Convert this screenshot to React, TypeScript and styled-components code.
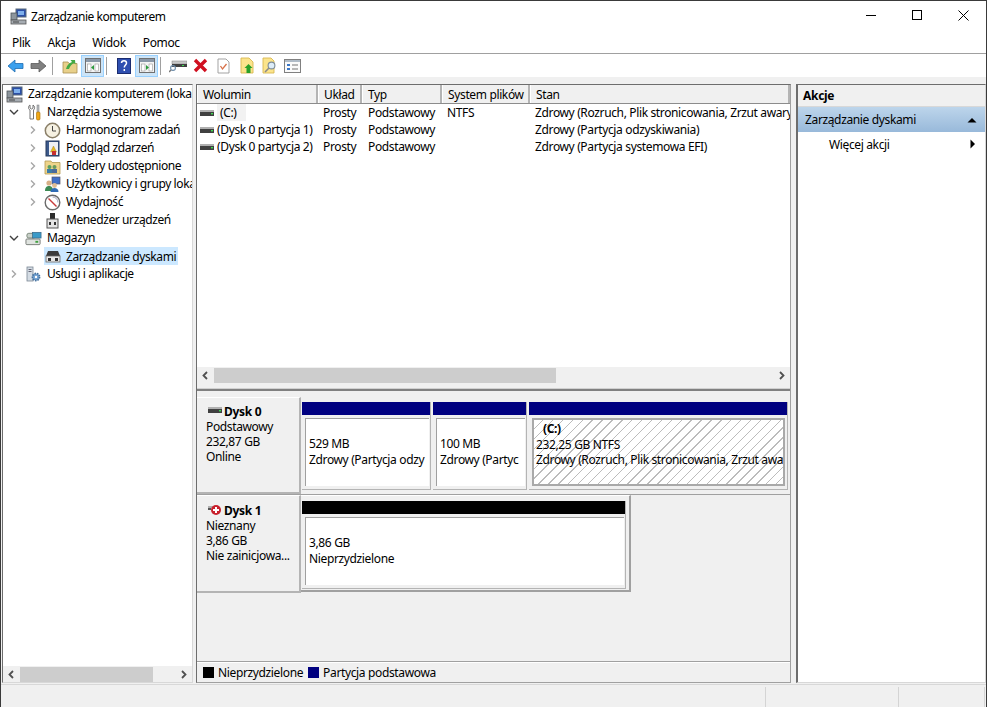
import React from 'react';
import styled, { createGlobalStyle } from 'styled-components';

const GlobalStyle = createGlobalStyle`
    html, body { margin: 0; padding: 0; background: #fff; }
    * { box-sizing: border-box; }
    body {
        font-family: "Noto Sans", "Open Sans", sans-serif;
        font-size: 12px;
        color: #000;
    }
`;

const Window = styled.div`
    width: 987px;
    height: 707px;
    display: flex;
    flex-direction: column;
    background: #f0f0f0;
    border-top: 1px solid #3a3a3a;
    border-left: 1px solid #3a3a3a;
    border-right: 1px solid #3a3a3a;
    overflow: hidden;
    letter-spacing: -0.36px;
`;

const TitleBar = styled.div`
    height: 31px;
    flex: none;
    background: #fff;
    display: flex;
    align-items: center;
    padding-left: 9px;
`;

const TitleText = styled.span`
    flex: 1;
    padding: 0 0 1px 4px;
    letter-spacing: -0.46px;
`;

const WinButton = styled.div`
    width: 46px;
    height: 31px;
    display: flex;
    align-items: center;
    justify-content: center;
    padding-bottom: 2px;
`;

const MenuBar = styled.div`
    height: 22px;
    flex: none;
    background: #fff;
    border-bottom: 1px solid #a0a0a0;
    display: flex;
    align-items: center;
    padding-left: 11px;
    gap: 17px;
`;

const ToolBar = styled.div`
    height: 23px;
    flex: none;
    background: #fff;
    display: flex;
    align-items: center;
    padding-left: 3px;
`;

const ToolButton = styled.div<{ $active?: boolean }>`
    width: 23px;
    height: 22px;
    display: flex;
    align-items: center;
    justify-content: center;
    background: ${p => (p.$active ? '#cce4f7' : 'transparent')};
    border: 1px solid ${p => (p.$active ? '#99d1ff' : 'transparent')};
`;

const ToolSep = styled.div`
    width: 1px;
    height: 18px;
    background: #a0a0a0;
    margin: 0 5px 0 2px;
`;

const Main = styled.div`
    flex: 1;
    min-height: 0;
    display: flex;
    padding: 7px 0 1px 1px;
    border-bottom: 1px solid #d8d8d8;
`;

const TreePane = styled.div`
    width: 191px;
    flex: none;
    display: flex;
    flex-direction: column;
    background: #fff;
    border: 1px solid #6d6d6d;
    border-right-color: #d8d8d8;
    border-bottom-color: #d8d8d8;
`;

const Tree = styled.div`
    flex: 1;
    overflow: hidden;
    letter-spacing: -0.4px;
`;

const TreeRow = styled.div<{ $level: number }>`
    height: 18px;
    display: flex;
    align-items: center;
    white-space: nowrap;
    padding-left: ${p => [3, 5, 24][p.$level]}px;
`;

const Chevron = styled.div`
    width: 12px;
    flex: none;
    display: flex;
    justify-content: center;
    margin-right: 5px;
`;

const TreeIcon = styled.div`
    width: 17px;
    height: 17px;
    flex: none;
    display: flex;
    align-items: center;
    justify-content: center;
    margin-right: 5px;
`;

const TreeLabel = styled.span`
    line-height: 18px;
`;

const SelectedRow = styled.div`
    display: flex;
    align-items: center;
    background: #cce8ff;
    width: 134px;
    height: 18px;
    margin-left: 17px;
`;

const ScrollBar = styled.div`
    height: 16px;
    flex: none;
    display: flex;
    align-items: center;
    background: #f0f0f0;
`;

const ScrollArrow = styled.div`
    width: 17px;
    flex: none;
    display: flex;
    justify-content: center;
`;

const ScrollTrack = styled.div`
    flex: 1;
    height: 15px;
`;

const ScrollThumb = styled.div<{ $w: number }>`
    width: ${p => p.$w}px;
    height: 15px;
    background: #cdcdcd;
`;

const Center = styled.div`
    width: 595px;
    flex: none;
    margin-left: 3px;
    display: flex;
    flex-direction: column;
    border: 1px solid #6d6d6d;
    border-right-color: #a0a0a0;
    border-bottom-color: #a0a0a0;
    min-height: 0;
`;

const ListPane = styled.div`
    height: 306px;
    flex: none;
    display: flex;
    flex-direction: column;
    background: #fff;
    border-bottom: 2px solid #808080;
`;

const ListHeader = styled.div`
    height: 19px;
    flex: none;
    display: flex;
    background: #f0f0f0;
    border-bottom: 1px solid #8c8c8c;
`;

const HeaderCell = styled.div<{ $w: number; $grow?: boolean }>`
    width: ${p => p.$w}px;
    flex: ${p => (p.$grow ? 1 : 'none')};
    padding-left: 5px;
    line-height: 19px;
    white-space: nowrap;
    overflow: hidden;
    border-right: 2px solid #b4b4b4;
    border-left: 1px solid #fff;
`;

const ListBody = styled.div`
    flex: 1;
    min-height: 0;
`;

const ListRow = styled.div`
    height: 17px;
    display: flex;
    align-items: center;
    white-space: nowrap;
`;

const Cell = styled.div<{ $w: number; $grow?: boolean }>`
    width: ${p => p.$w}px;
    flex: ${p => (p.$grow ? 1 : 'none')};
    padding-left: 6px;
    overflow: hidden;
    white-space: nowrap;
`;

const NameCell = styled.div`
    width: 120px;
    flex: none;
    display: flex;
    align-items: center;
    padding-left: 3px;
    gap: 3px;
    overflow: hidden;
`;

const FocusedName = styled.span`
    background: #f2f2f2;
    padding: 0 9px 0 3px;
    line-height: 17px;
`;

const ListFooter = styled.div`
    height: 6px;
    flex: none;
    background: #f0f0f0;
    border-bottom: 1px solid #d0d0d0;
`;

const GraphPane = styled.div`
    flex: 1;
    min-height: 0;
    display: flex;
    flex-direction: column;
    padding-top: 6px;
`;

const DiskList = styled.div`
    flex: 1;
    min-height: 0;
`;

const DiskRow = styled.div<{ $h: number }>`
    height: ${p => p.$h}px;
    display: flex;
    border-bottom: 1px solid #a0a0a0;
`;

const LastDiskRow = styled(DiskRow)`
    border-bottom: none;
`;

const DiskInfo = styled.div<{ $top: number }>`
    width: 104px;
    flex: none;
    padding: ${p => p.$top}px 0 0 9px;
    line-height: 15px;
    border-right: 2px solid #b4b4b4;
    border-bottom: 2px solid #b4b4b4;
    border-top: 1px solid #fff;
    white-space: nowrap;
`;

const DiskName = styled.div`
    display: flex;
    align-items: center;
    gap: 2px;
    font-weight: 700;
    padding-left: 2px;
    height: 16px;
    letter-spacing: -0.3px;
`;

const DiskNameIcon = styled.span<{ $lift: number }>`
    display: flex;
    margin-bottom: ${p => p.$lift}px;
`;

const Volumes = styled.div<{ $w: number }>`
    width: ${p => p.$w}px;
    height: 100%;
    display: flex;
    gap: 2px;
    padding: 5px 0 0 1px;
`;

const FramedVolumes = styled(Volumes)`
    height: 97px;
    padding: 5px 4px 4px 1px;
    border-right: 2px solid #a0a0a0;
    border-bottom: 2px solid #a0a0a0;
    border-top: 1px solid #fff;
`;

const Partition = styled.div<{ $w: number }>`
    width: ${p => p.$w}px;
    flex: none;
    display: flex;
    flex-direction: column;
    height: 88px;
    border-right: 1px solid #b4b4b4;
    border-bottom: 1px solid #b4b4b4;
`;

const PartitionBar = styled.div<{ $color: string }>`
    height: 13px;
    flex: none;
    background: ${p => p.$color};
`;

const PartitionBody = styled.div`
    flex: 1;
    margin: 3px 1px 3px 3px;
    background: #fff;
    border-top: 1px solid #a0a0a0;
    border-left: 1px solid #a0a0a0;
    padding: 17px 0 0 3px;
    line-height: 15.5px;
    white-space: nowrap;
    overflow: hidden;
`;

const HatchedBody = styled(PartitionBody)`
    margin: 3px 2px 3px 3px;
    padding: 1px 0 0 2px;
    border: 2px solid #a9a9a9;
    background-color: #fff;
    background-image: repeating-linear-gradient(
        135deg,
        transparent 0,
        transparent 6px,
        #bcbcbc 6px,
        #bcbcbc 7px
    );
`;

const HatchedName = styled.div`
    font-weight: 700;
    padding-left: 7px;
`;

const Legend = styled.div`
    height: 20px;
    flex: none;
    display: flex;
    align-items: center;
    padding: 0 0 1px 6px;
    border-top: 1px solid #fff;
    box-shadow: 0 -1px 0 #a0a0a0;
`;

const LegendSwatch = styled.div<{ $color: string }>`
    width: 11px;
    height: 11px;
    background: ${p => p.$color};
    margin-right: 4px;
`;

const LegendText = styled.span`
    margin-right: 5px;
`;

const ActionPane = styled.div`
    flex: 1;
    margin-left: 5px;
    background: #fff;
    border: 1px solid #6d6d6d;
    border-left-width: 2px;
    border-right: 1px solid #d8d8d8;
    border-bottom-color: #d8d8d8;
`;

const ActionHeader = styled.div`
    height: 22px;
    background: #f0f0f0;
    font-weight: 700;
    line-height: 22px;
    padding-left: 5px;
    border-bottom: 1px solid #d8d8d8;
    letter-spacing: -0.3px;
`;

const ActionBand = styled.div`
    height: 25px;
    display: flex;
    align-items: center;
    justify-content: space-between;
    padding: 0 8px 0 7px;
    background: linear-gradient(#bdd5eb, #98b9da);
`;

const ActionItem = styled.div`
    height: 24px;
    display: flex;
    align-items: center;
    justify-content: space-between;
    padding: 0 7px 0 31px;
`;

const StatusBar = styled.div`
    height: 22px;
    flex: none;
    display: flex;
    padding-top: 2px;
    justify-content: flex-end;
`;

const StatusCell = styled.div<{ $w: number }>`
    width: ${p => p.$w}px;
    border-left: 1px solid #d4d4d4;
`;

const ChevronIcon = ({ dir }: { dir: 'left' | 'right' | 'down' }) => {
    const points = { left: '6,1.5 2.5,5 6,8.5', right: '3,1.5 6.5,5 3,8.5', down: '1,3 5,7 9,3' }[dir];
    const color = dir === 'down' ? '#404040' : '#a6a6a6';
    return (
        <svg width="10" height="10" viewBox="0 0 10 10">
            <polyline points={points} fill="none" stroke={color} strokeWidth="1.4" />
        </svg>
    );
};

const ScrollChevron = ({ dir }: { dir: 'left' | 'right' }) => (
    <svg width="9" height="9" viewBox="0 0 9 9">
        <polyline
            points={dir === 'left' ? '6,1 2.5,4.5 6,8' : '3,1 6.5,4.5 3,8'}
            fill="none"
            stroke="#505050"
            strokeWidth="1.8"
        />
    </svg>
);

const ComputerIcon = () => (
    <svg width="17" height="17" viewBox="0 0 17 17">
        <rect x="6" y="1" width="10" height="8" fill="#2b4fa8" stroke="#5a6a7a" />
        <rect x="8" y="3" width="6" height="4" fill="#7fb0ec" />
        <rect x="1" y="5" width="6" height="7" fill="#8d959c" stroke="#4d555c" strokeWidth="0.8" />
        <rect x="1" y="12" width="15" height="4" fill="#a6acb2" stroke="#555" strokeWidth="0.8" />
        <rect x="3" y="13.5" width="6" height="1" fill="#444" />
    </svg>
);

const ToolsIcon = () => (
    <svg width="16" height="17" viewBox="0 0 16 17">
        <path d="M4 1v3l1.5 1L7 4V1c2 1 2 4 .5 5v9H4V6C2 5 2 2 4 1z" fill="#fff" stroke="#666" strokeWidth="0.9" />
        <rect x="11" y="1" width="2" height="8" fill="#b9bdc2" stroke="#777" strokeWidth="0.5" />
        <rect x="10.5" y="8" width="3.5" height="8" rx="1.2" fill="#f0a818" stroke="#a86c00" strokeWidth="0.6" />
    </svg>
);

const ClockIcon = () => (
    <svg width="17" height="17" viewBox="0 0 17 17">
        <circle cx="8.5" cy="8.5" r="7.2" fill="#f6f1e2" stroke="#8a7f68" strokeWidth="1.5" />
        <polyline points="8.5,4 8.5,9 12,9" fill="none" stroke="#444" strokeWidth="1" />
    </svg>
);

const EventIcon = () => (
    <svg width="15" height="17" viewBox="0 0 15 17">
        <rect x="1" y="1" width="13" height="15" fill="#3d5a8c" stroke="#24395c" />
        <rect x="4" y="2" width="9" height="13" fill="#eef0f4" />
        <path d="M8.5 6l3 6h-6z" fill="#e8b820" stroke="#9a7a10" strokeWidth="0.4" />
        <rect x="7" y="11" width="4" height="4" fill="#c83030" />
    </svg>
);

const SharedIcon = () => (
    <svg width="17" height="17" viewBox="0 0 17 17">
        <path d="M1 3h6l1 1.5h8V16H1z" fill="#eed48a" stroke="#b49a50" strokeWidth="0.8" />
        <circle cx="5.5" cy="9" r="2" fill="#5aa060" />
        <rect x="3" y="11" width="5" height="4" fill="#3c7ca8" />
        <circle cx="10.5" cy="9" r="2" fill="#6a9a5c" />
        <rect x="8" y="11" width="5" height="4" fill="#4a6a9a" />
    </svg>
);

const UsersIcon = () => (
    <svg width="17" height="17" viewBox="0 0 17 17">
        <rect x="8" y="1" width="8" height="7" fill="#3f6fc8" stroke="#556" strokeWidth="0.7" />
        <circle cx="5" cy="7" r="2.6" fill="#d8b088" />
        <path d="M1 15c0-4 2-5 4-5s4 1 4 5z" fill="#3d8a55" />
        <circle cx="10.5" cy="9.5" r="2.4" fill="#e0bc94" />
        <path d="M6.5 16c0-3 2-4 4-4s4 1 4 4z" fill="#2f6bb5" />
    </svg>
);

const PerfIcon = () => (
    <svg width="17" height="17" viewBox="0 0 17 17">
        <circle cx="8.5" cy="8.5" r="7.3" fill="#fff" stroke="#6a6a6a" strokeWidth="1.4" />
        <line x1="4.5" y1="4.5" x2="12.5" y2="12.5" stroke="#c83a3a" strokeWidth="1.4" />
        <path d="M8.5 3a5.5 5.5 0 0 1 5.5 5.5" fill="none" stroke="#88a" strokeWidth="0.8" />
    </svg>
);

const DeviceIcon = () => (
    <svg width="15" height="17" viewBox="0 0 15 17">
        <rect x="5" y="1" width="5" height="6" fill="#2c2c2c" />
        <rect x="2" y="7" width="11" height="9" fill="#e4e4e4" stroke="#555" />
        <rect x="4" y="10" width="2" height="3" fill="#333" />
        <rect x="9" y="10" width="2" height="3" fill="#333" />
    </svg>
);

const StorageIcon = () => (
    <svg width="18" height="17" viewBox="0 0 18 17">
        <rect x="2" y="3" width="9" height="5" rx="2" fill="#c9d0c9" stroke="#607060" strokeWidth="0.8" />
        <rect x="8" y="2" width="9" height="6" fill="#3a9ac8" stroke="#3a6a8a" strokeWidth="0.8" />
        <rect x="1" y="9" width="15" height="6" rx="1" fill="#dfe3df" stroke="#6a6f6a" strokeWidth="0.9" />
        <rect x="11" y="11" width="3" height="2" fill="#40a040" />
    </svg>
);

const DiskMgmtIcon = () => (
    <svg width="16" height="13" viewBox="0 0 16 13">
        <path d="M3 1h10l2 5H1z" fill="#3c3c3c" />
        <rect x="1" y="6" width="14" height="6" fill="#e8e8e8" stroke="#666" strokeWidth="0.8" />
        <rect x="3" y="8" width="3" height="3" fill="#333" />
        <rect x="10" y="8" width="3" height="3" fill="#333" />
    </svg>
);

const ServicesIcon = () => (
    <svg width="15" height="17" viewBox="0 0 15 17">
        <rect x="1" y="1" width="6" height="14" fill="#d4dce4" stroke="#7a8794" strokeWidth="0.8" />
        <rect x="2.5" y="3" width="3" height="1" fill="#667" />
        <rect x="2.5" y="5" width="3" height="1" fill="#667" />
        <circle cx="10" cy="11" r="3.6" fill="#6f9fd0" stroke="#45709c" strokeWidth="1.6" strokeDasharray="1.5 1" />
        <circle cx="10" cy="11" r="1.2" fill="#fff" />
    </svg>
);

const DriveIcon = () => (
    <svg width="14" height="6" viewBox="0 0 14 6">
        <rect x="0" y="0" width="14" height="2" fill="#b0b0b0" />
        <rect x="0" y="2" width="14" height="4" fill="#404040" />
        <rect x="11" y="3" width="2" height="1.4" fill="#3fdc50" />
    </svg>
);

const ErrorDiskIcon = () => (
    <svg width="14" height="12" viewBox="0 0 14 12">
        <rect x="0" y="2" width="5" height="2" fill="#b0b0b0" />
        <rect x="0" y="4" width="3" height="2" fill="#555" />
        <circle cx="8" cy="6" r="5" fill="#c8202c" />
        <rect x="5" y="5" width="6" height="2" fill="#fff" />
        <rect x="7" y="3" width="2" height="6" fill="#fff" />
    </svg>
);

const BackIcon = () => (
    <svg width="17" height="14" viewBox="0 0 17 14">
        <path d="M1 7l7-6v3.5h8v5H8V13z" fill="#3aa0ee" stroke="#1e6cb0" strokeWidth="0.8" />
    </svg>
);

const ForwardIcon = () => (
    <svg width="17" height="14" viewBox="0 0 17 14">
        <path d="M16 7L9 1v3.5H1v5h8V13z" fill="#808080" stroke="#5a5a5a" strokeWidth="0.8" />
    </svg>
);

const FolderUpIcon = () => (
    <svg width="16" height="16" viewBox="0 0 16 16">
        <path d="M1 4h5l1 1.5h8V15H1z" fill="#e8d08a" stroke="#a89050" strokeWidth="0.8" />
        <path d="M4 11c1-4 3-6 6-7L8.5 2 13 2l.5 4.5L12 5c-2 1-4 3-5 6z" fill="#44aa44" />
    </svg>
);

const PanelIcon = ({ right }: { right?: boolean }) => (
    <svg width="16" height="15" viewBox="0 0 16 15">
        <rect x="0.5" y="0.5" width="15" height="14" fill="#f4f4f4" stroke="#707070" />
        <rect x="1" y="1" width="14" height="3" fill="#8a98a8" />
        <rect x="2.5" y="6" width="3.5" height="7" fill="#fff" stroke="#999" strokeWidth="0.6" />
        <rect x="10" y="6" width="3.5" height="7" fill="#fff" stroke="#999" strokeWidth="0.6" />
        <path d={right ? 'M7 7l3 2.5L7 12z' : 'M9 7L6 9.5 9 12z'} fill="#2c9a3c" />
    </svg>
);

const HelpIcon = () => (
    <svg width="14" height="16" viewBox="0 0 14 16">
        <rect x="0.5" y="0.5" width="13" height="15" fill="#2f4fb0" stroke="#1a2c70" />
        <path d="M4.5 5c0-3 5-3 5 0 0 2-2.2 2-2.2 4.5M7.3 11v2" fill="none" stroke="#fff" strokeWidth="1.5" />
    </svg>
);

const ConnectIcon = () => (
    <svg width="18" height="15" viewBox="0 0 18 15">
        <rect x="3" y="3" width="15" height="3" fill="#c8c8c8" stroke="#808080" strokeWidth="0.5" />
        <rect x="3" y="6" width="15" height="3" fill="#404040" />
        <rect x="13" y="7" width="2" height="1" fill="#40e050" />
        <circle cx="4" cy="10" r="2.4" fill="none" stroke="#6a8aa8" strokeWidth="1.1" />
        <line x1="2" y1="12" x2="0" y2="14" stroke="#777" strokeWidth="1.4" />
    </svg>
);

const DeleteIcon = () => (
    <svg width="15" height="15" viewBox="0 0 15 15">
        <path d="M2 2l11 11M13 2L2 13" stroke="#d01020" strokeWidth="3.4" />
    </svg>
);

const CheckDocIcon = () => (
    <svg width="13" height="16" viewBox="0 0 13 16">
        <path d="M1 1h8l3 3v11H1z" fill="#fff" stroke="#999" strokeWidth="0.9" />
        <polyline points="3.5,8 5.5,11 9.5,6" fill="none" stroke="#d87048" strokeWidth="1.3" />
    </svg>
);

const NoteUpIcon = () => (
    <svg width="14" height="17" viewBox="0 0 14 17">
        <path d="M1 1h8l4 4v11H1z" fill="#fbe48c" stroke="#d8b850" strokeWidth="0.9" />
        <path d="M8.5 7l4 4H10.5v5h-4v-5H4.5z" fill="#28a028" />
    </svg>
);

const NoteSearchIcon = () => (
    <svg width="15" height="17" viewBox="0 0 15 17">
        <path d="M1 1h8l3 3v12H1z" fill="#fbe48c" stroke="#d8b850" strokeWidth="0.9" />
        <circle cx="9.5" cy="8.5" r="3.4" fill="#dcecf8" stroke="#7c8c98" strokeWidth="1.1" />
        <line x1="7" y1="11" x2="3" y2="15" stroke="#8a8a8a" strokeWidth="1.6" />
    </svg>
);

const ChecklistIcon = () => (
    <svg width="17" height="14" viewBox="0 0 17 14">
        <rect x="0.5" y="0.5" width="16" height="13" fill="#fbfbfb" stroke="#808080" />
        <rect x="1" y="1" width="15" height="2" fill="#b0bcc8" />
        <rect x="3" y="5" width="3" height="2" fill="#3c78c8" />
        <rect x="3" y="9" width="3" height="2" fill="#3c78c8" />
        <rect x="8" y="5.5" width="6" height="1" fill="#777" />
        <rect x="8" y="9.5" width="6" height="1" fill="#777" />
    </svg>
);

const CaptionIcon = ({ kind }: { kind: 'min' | 'max' | 'close' }) => (
    <svg width="11" height="11" viewBox="0 0 11 11" shapeRendering="crispEdges">
        {kind === 'min' && <rect x="0" y="5" width="10" height="1" fill="#000" />}
        {kind === 'max' && <rect x="0.5" y="0.5" width="9" height="9" fill="none" stroke="#000" />}
        {kind === 'close' && (
            <path d="M0.5 0.5l10 10M10.5 0.5l-10 10" stroke="#000" fill="none" shapeRendering="auto" />
        )}
    </svg>
);

const Triangle = ({ up }: { up?: boolean }) => (
    <svg width="10" height="10" viewBox="0 0 10 10">
        <path d={up ? 'M0.5 7.5L5 3l4.5 4.5z' : 'M2.5 0.5L7 5l-4.5 4.5z'} fill="#000" />
    </svg>
);

type TreeItem = {
    label: string;
    level: 0 | 1 | 2;
    chevron?: 'right' | 'down';
    icon: React.ReactNode;
};

const treeItems: TreeItem[] = [
    { label: 'Zarządzanie komputerem (lokalne)', level: 0, icon: <ComputerIcon /> },
    { label: 'Narzędzia systemowe', level: 1, chevron: 'down', icon: <ToolsIcon /> },
    { label: 'Harmonogram zadań', level: 2, chevron: 'right', icon: <ClockIcon /> },
    { label: 'Podgląd zdarzeń', level: 2, chevron: 'right', icon: <EventIcon /> },
    { label: 'Foldery udostępnione', level: 2, chevron: 'right', icon: <SharedIcon /> },
    { label: 'Użytkownicy i grupy lokalne', level: 2, chevron: 'right', icon: <UsersIcon /> },
    { label: 'Wydajność', level: 2, chevron: 'right', icon: <PerfIcon /> },
    { label: 'Menedżer urządzeń', level: 2, icon: <DeviceIcon /> },
    { label: 'Magazyn', level: 1, chevron: 'down', icon: <StorageIcon /> },
];

const volumes = [
    { name: '(Dysk 0 partycja 1)', state: 'Zdrowy (Partycja odzyskiwania)', fs: '' },
    { name: '(Dysk 0 partycja 2)', state: 'Zdrowy (Partycja systemowa EFI)', fs: '' },
];

const App: React.FC = () => {
    return (
        <Window>
            <GlobalStyle />
            <TitleBar>
                <ComputerIcon />
                <TitleText>Zarządzanie komputerem</TitleText>
                <WinButton><CaptionIcon kind="min" /></WinButton>
                <WinButton><CaptionIcon kind="max" /></WinButton>
                <WinButton><CaptionIcon kind="close" /></WinButton>
            </TitleBar>
            <MenuBar>
                <span>Plik</span>
                <span>Akcja</span>
                <span>Widok</span>
                <span>Pomoc</span>
            </MenuBar>
            <ToolBar>
                <ToolButton><BackIcon /></ToolButton>
                <ToolButton><ForwardIcon /></ToolButton>
                <ToolSep />
                <ToolButton><FolderUpIcon /></ToolButton>
                <ToolButton $active><PanelIcon /></ToolButton>
                <ToolSep />
                <ToolButton><HelpIcon /></ToolButton>
                <ToolButton $active><PanelIcon right /></ToolButton>
                <ToolSep />
                <ToolButton><ConnectIcon /></ToolButton>
                <ToolButton><DeleteIcon /></ToolButton>
                <ToolButton><CheckDocIcon /></ToolButton>
                <ToolButton><NoteUpIcon /></ToolButton>
                <ToolButton><NoteSearchIcon /></ToolButton>
                <ToolButton><ChecklistIcon /></ToolButton>
            </ToolBar>
            <Main>
                <TreePane>
                    <Tree>
                        {treeItems.map(item => (
                            <TreeRow key={item.label} $level={item.level}>
                                {item.level > 0 && (
                                    <Chevron>{item.chevron && <ChevronIcon dir={item.chevron} />}</Chevron>
                                )}
                                <TreeIcon>{item.icon}</TreeIcon>
                                <TreeLabel>{item.label}</TreeLabel>
                            </TreeRow>
                        ))}
                        <TreeRow $level={2}>
                            <SelectedRow>
                                <TreeIcon><DiskMgmtIcon /></TreeIcon>
                                <span>Zarządzanie dyskami</span>
                            </SelectedRow>
                        </TreeRow>
                        <TreeRow $level={1}>
                            <Chevron><ChevronIcon dir="right" /></Chevron>
                            <TreeIcon><ServicesIcon /></TreeIcon>
                            <TreeLabel>Usługi i aplikacje</TreeLabel>
                        </TreeRow>
                    </Tree>
                    <ScrollBar>
                        <ScrollArrow><ScrollChevron dir="left" /></ScrollArrow>
                        <ScrollTrack><ScrollThumb $w={133} /></ScrollTrack>
                        <ScrollArrow><ScrollChevron dir="right" /></ScrollArrow>
                    </ScrollBar>
                </TreePane>
                <Center>
                    <ListPane>
                        <ListHeader>
                            <HeaderCell $w={121}>Wolumin</HeaderCell>
                            <HeaderCell $w={44}>Układ</HeaderCell>
                            <HeaderCell $w={80}>Typ</HeaderCell>
                            <HeaderCell $w={88}>System plików</HeaderCell>
                            <HeaderCell $w={260} $grow>Stan</HeaderCell>
                        </ListHeader>
                        <ListBody>
                            <ListRow>
                                <NameCell>
                                    <DriveIcon />
                                    <FocusedName>(C:)</FocusedName>
                                </NameCell>
                                <Cell $w={45}>Prosty</Cell>
                                <Cell $w={79}>Podstawowy</Cell>
                                <Cell $w={88}>NTFS</Cell>
                                <Cell $w={200} $grow>Zdrowy (Rozruch, Plik stronicowania, Zrzut awaryjny, Partycja podstawowa)</Cell>
                            </ListRow>
                            {volumes.map(v => (
                                <ListRow key={v.name}>
                                    <NameCell>
                                        <DriveIcon />
                                        <span>{v.name}</span>
                                    </NameCell>
                                    <Cell $w={45}>Prosty</Cell>
                                    <Cell $w={79}>Podstawowy</Cell>
                                    <Cell $w={88}>{v.fs}</Cell>
                                    <Cell $w={200} $grow>{v.state}</Cell>
                                </ListRow>
                            ))}
                        </ListBody>
                        <ScrollBar>
                            <ScrollArrow><ScrollChevron dir="left" /></ScrollArrow>
                            <ScrollTrack><ScrollThumb $w={342} /></ScrollTrack>
                            <ScrollArrow><ScrollChevron dir="right" /></ScrollArrow>
                        </ScrollBar>
                        <ListFooter />
                    </ListPane>
                    <GraphPane>
                        <DiskList>
                            <DiskRow $h={98}>
                                <DiskInfo $top={5}>
                                    <DiskName>
                                        <DiskNameIcon $lift={3}><DriveIcon /></DiskNameIcon>
                                        Dysk 0
                                    </DiskName>
                                    <div>Podstawowy</div>
                                    <div>232,87 GB</div>
                                    <div>Online</div>
                                </DiskInfo>
                                <Volumes $w={489}>
                                    <Partition $w={129}>
                                        <PartitionBar $color="#000080" />
                                        <PartitionBody>
                                            <div>529 MB</div>
                                            <div>Zdrowy (Partycja odzy</div>
                                        </PartitionBody>
                                    </Partition>
                                    <Partition $w={94}>
                                        <PartitionBar $color="#000080" />
                                        <PartitionBody>
                                            <div>100 MB</div>
                                            <div>Zdrowy (Partyc</div>
                                        </PartitionBody>
                                    </Partition>
                                    <Partition $w={259}>
                                        <PartitionBar $color="#000080" />
                                        <HatchedBody>
                                            <HatchedName>(C:)</HatchedName>
                                            <div>232,25 GB NTFS</div>
                                            <div>Zdrowy (Rozruch, Plik stronicowania, Zrzut awa</div>
                                        </HatchedBody>
                                    </Partition>
                                </Volumes>
                            </DiskRow>
                            <LastDiskRow $h={98}>
                                <DiskInfo $top={6}>
                                    <DiskName>
                                        <DiskNameIcon $lift={1}><ErrorDiskIcon /></DiskNameIcon>
                                        Dysk 1
                                    </DiskName>
                                    <div>Nieznany</div>
                                    <div>3,86 GB</div>
                                    <div>Nie zainicjowa...</div>
                                </DiskInfo>
                                <FramedVolumes $w={330}>
                                    <Partition $w={324}>
                                        <PartitionBar $color="#000" />
                                        <PartitionBody>
                                            <div>3,86 GB</div>
                                            <div>Nieprzydzielone</div>
                                        </PartitionBody>
                                    </Partition>
                                </FramedVolumes>
                            </LastDiskRow>
                        </DiskList>
                        <Legend>
                            <LegendSwatch $color="#000" />
                            <LegendText>Nieprzydzielone</LegendText>
                            <LegendSwatch $color="#000080" />
                            <LegendText>Partycja podstawowa</LegendText>
                        </Legend>
                    </GraphPane>
                </Center>
                <ActionPane>
                    <ActionHeader>Akcje</ActionHeader>
                    <ActionBand>
                        <span>Zarządzanie dyskami</span>
                        <Triangle up />
                    </ActionBand>
                    <ActionItem>
                        <span>Więcej akcji</span>
                        <Triangle />
                    </ActionItem>
                </ActionPane>
            </Main>
            <StatusBar>
                <StatusCell $w={133} />
                <StatusCell $w={86} />
                <StatusCell $w={2} />
            </StatusBar>
        </Window>
    );
};

export default App;
